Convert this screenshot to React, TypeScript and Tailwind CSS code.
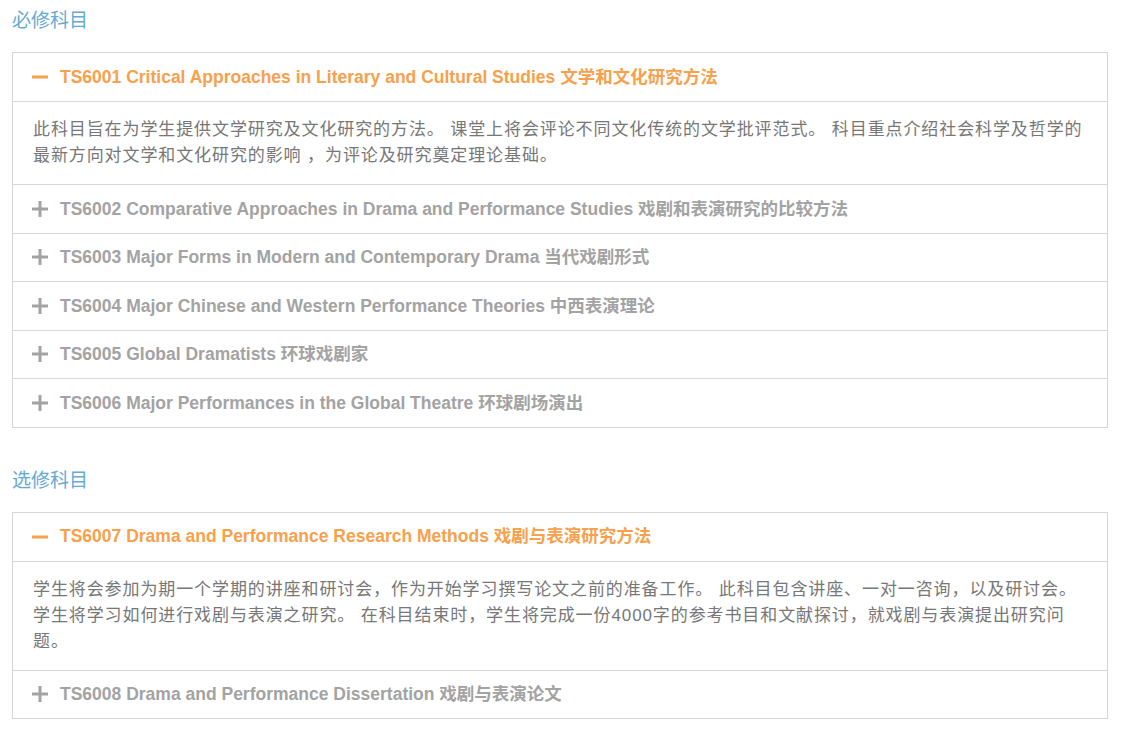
import React from "react";

type Item = { title: string; body?: string[] };

const required: Item[] = [
  {
    title: "TS6001 Critical Approaches in Literary and Cultural Studies 文学和文化研究方法",
    body: [
      "此科目旨在为学生提供文学研究及文化研究的方法。 课堂上将会评论不同文化传统的文学批评范式。 科目重点介绍社会科学及哲学的",
      "最新方向对文学和文化研究的影响 ，为评论及研究奠定理论基础。",
    ],
  },
  { title: "TS6002 Comparative Approaches in Drama and Performance Studies 戏剧和表演研究的比较方法" },
  { title: "TS6003 Major Forms in Modern and Contemporary Drama 当代戏剧形式" },
  { title: "TS6004 Major Chinese and Western Performance Theories 中西表演理论" },
  { title: "TS6005 Global Dramatists 环球戏剧家" },
  { title: "TS6006 Major Performances in the Global Theatre 环球剧场演出" },
];

const elective: Item[] = [
  {
    title: "TS6007 Drama and Performance Research Methods 戏剧与表演研究方法",
    body: [
      "学生将会参加为期一个学期的讲座和研讨会，作为开始学习撰写论文之前的准备工作。 此科目包含讲座、一对一咨询，以及研讨会。",
      "学生将学习如何进行戏剧与表演之研究。 在科目结束时，学生将完成一份4000字的参考书目和文献探讨，就戏剧与表演提出研究问",
      "题。",
    ],
  },
  { title: "TS6008 Drama and Performance Dissertation 戏剧与表演论文" },
];

function Icon({ open }: { open: boolean }) {
  return (
    <svg width="16" height="16" viewBox="0 0 16 16" className="shrink-0">
      <rect x="0" y="6.5" width="16" height="3" fill={open ? "#f8a04c" : "#a3a3a3"} />
      {!open && <rect x="6.5" y="0" width="3" height="16" fill="#a3a3a3" />}
    </svg>
  );
}

function Accordion({ items }: { items: Item[] }) {
  return (
    <div className="border border-[#d6d6d6]">
      {items.map((it, i) => {
        const open = !!it.body;
        return (
          <div key={i} className={i > 0 ? "border-t border-[#d6d6d6]" : ""}>
            <div className={`flex items-center gap-3 pl-[19px] pr-5 ${i > 0 ? "h-[47.5px]" : "h-12"}`}>
              <Icon open={open} />
              <span
                className={`text-[17.5px] font-bold whitespace-nowrap ${open ? "text-[#f8a04c]" : "text-[#a3a3a3]"}`}
              >
                {it.title}
              </span>
            </div>
            {open && (
              <div className="border-t border-[#d6d6d6] px-5 py-[15px] text-[17px] leading-[26px] tracking-[0.9px] text-[#777777]">
                {it.body!.map((line, j) => (
                  <div key={j} className="whitespace-nowrap">
                    {line}
                  </div>
                ))}
              </div>
            )}
          </div>
        );
      })}
    </div>
  );
}

export default function App() {
  return (
    <div
      className="bg-white px-3 pt-[6px]"
      style={{ fontFamily: '"Liberation Sans", Arial, "Noto Sans CJK SC", sans-serif' }}
    >
      <h2 className="mb-4 h-[30px] text-[19px] leading-[30px] font-normal text-[#65a9d6]">必修科目</h2>
      <div className="w-[1096px]">
        <Accordion items={required} />
      </div>
      <h2 className="mt-[38px] mb-4 h-[30px] text-[19px] leading-[30px] font-normal text-[#65a9d6]">选修科目</h2>
      <div className="w-[1096px]">
        <Accordion items={elective} />
      </div>
    </div>
  );
}
